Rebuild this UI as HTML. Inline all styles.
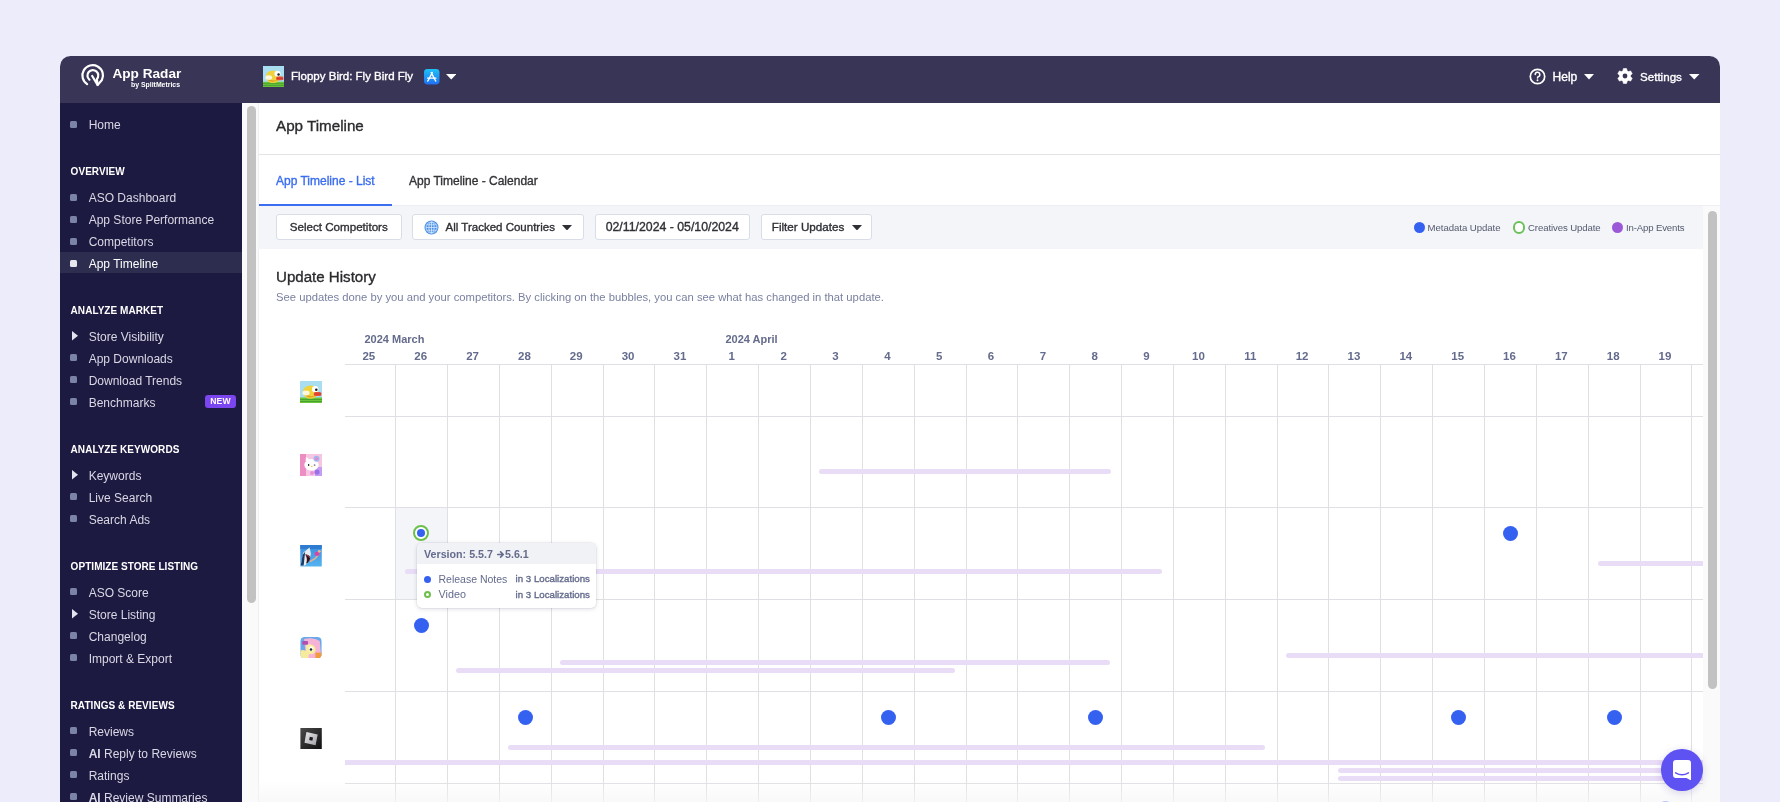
<!DOCTYPE html>
<html><head><meta charset="utf-8">
<style>
*{margin:0;padding:0;box-sizing:border-box;}
html,body{width:1780px;height:802px;overflow:hidden;background:#edecfa;font-family:"Liberation Sans",sans-serif;}
.a{position:absolute;white-space:nowrap;}
b{font-weight:700;}
</style></head>
<body><div style="position:absolute;left:0;top:0;width:1780px;height:802px;overflow:hidden;will-change:transform;">
<div class="a" style="left:60px;top:56px;width:1660px;height:760px;border-radius:10.5px 10.5px 0 0;overflow:hidden;background:#fff;"><div class="a" style="left:0;top:0;width:1660px;height:47px;background:#393556;"></div><div class="a" style="left:0;top:47px;width:182px;height:720px;background:#1d1a42;"></div></div>
<svg class="a" style="left:76px;top:60px" width="30" height="30" viewBox="0 0 30 30">
<g fill="none" stroke="#fff" stroke-width="2.2" stroke-linecap="round" stroke-linejoin="round">
<path d="M11.1 24.1 A10.3 10.3 0 1 1 25.9 20.1 L21.6 25"/>
<path d="M13.4 19.7 A5.4 5.4 0 1 1 20.9 19.1 L21.6 25 L16.2 16"/>
</g></svg>
<div class="a" style="left:112.50px;top:67.29px;font-size:13.6px;line-height:13.6px;color:#fff;font-weight:700;">App Radar</div>
<div class="a" style="left:131.00px;top:82.46px;font-size:6.9px;line-height:6.9px;color:#fff;font-weight:700;">by SplitMetrics</div>
<svg class="a" style="left:263.3px;top:66px" width="21" height="21" viewBox="0 0 22 22">
<rect width="22" height="22" fill="#a9def0"/><rect y="16.5" width="22" height="5.5" fill="#6cc43c"/><path d="M0 18.5H22M0 20.5H22" stroke="#3f9a2a" stroke-width="0.8"/>
<ellipse cx="10.5" cy="11.2" rx="7.6" ry="6.6" fill="#f0d23a"/><path d="M3.5 13 Q10 19.5 17 13.5 Q12 17 3.5 13Z" fill="#e0a020"/>
<ellipse cx="6" cy="12" rx="3.6" ry="2.4" fill="#fbf6e0"/>
<circle cx="15.2" cy="8.2" r="3.2" fill="#fff"/><circle cx="16.3" cy="8.8" r="1.3" fill="#202020"/>
<rect x="13.8" y="11" width="7.6" height="4" rx="1.5" fill="#e8503a"/><path d="M14.5 13H21" stroke="#c03020" stroke-width="0.6"/>
</svg>
<div class="a" style="left:291.00px;top:71.47px;font-size:11.5px;line-height:11.5px;color:#fff;-webkit-text-stroke:0.35px currentColor;">Floppy Bird: Fly Bird Fly</div>
<svg class="a" style="left:424px;top:69px" width="15.5" height="15.5" viewBox="0 0 16 16">
<defs><linearGradient id="asg" x1="0" y1="0" x2="0" y2="1"><stop offset="0" stop-color="#1ec1f8"/><stop offset="1" stop-color="#1f6ff2"/></linearGradient></defs>
<rect width="16" height="16" rx="3.6" fill="url(#asg)"/>
<g stroke="#fff" stroke-width="1.4" stroke-linecap="round" fill="none"><path d="M8.6 3.6 L4.6 11.2 L3.8 12.4"/><path d="M7.4 3.6 L11.4 11.2 L12.2 12.4"/><path d="M3.6 9.4 H12.4"/></g>
</svg>
<svg class="a" style="left:445.5px;top:74px" width="10.5" height="5.5" viewBox="0 0 10.5 5.5"><path d="M0 0H10.5L5.25 5.5Z" fill="#fff"/></svg>
<svg class="a" style="left:1529px;top:67.9px" width="17" height="17" viewBox="0 0 17 17">
<circle cx="8.5" cy="8.5" r="7.2" fill="none" stroke="#fff" stroke-width="1.7"/>
<path d="M6.2 6.6 A2.3 2.3 0 1 1 9.3 8.7 C8.7 9 8.5 9.3 8.5 10.1" fill="none" stroke="#fff" stroke-width="1.5" stroke-linecap="round"/>
<circle cx="8.5" cy="12.3" r="0.95" fill="#fff"/>
</svg>
<div class="a" style="left:1552.60px;top:71.14px;font-size:12px;line-height:12px;color:#fff;-webkit-text-stroke:0.35px currentColor;">Help</div>
<svg class="a" style="left:1584px;top:74px" width="10" height="5.5" viewBox="0 0 10 5.5"><path d="M0 0H10L5.0 5.5Z" fill="#fff"/></svg>
<svg class="a" style="left:1617.2px;top:67.9px" width="16" height="16" viewBox="0 0 16 16">
<path d="M5.92 2.80 L6.42 0.57 L9.58 0.57 L10.08 2.80 L11.47 3.60 L13.65 2.91 L15.23 5.66 L13.54 7.20 L13.54 8.80 L15.23 10.34 L13.65 13.09 L11.47 12.40 L10.08 13.20 L9.58 15.43 L6.42 15.43 L5.92 13.20 L4.53 12.40 L2.35 13.09 L0.77 10.34 L2.46 8.80 L2.46 7.20 L0.77 5.66 L2.35 2.91 L4.53 3.60Z" fill="#fff" stroke="#fff" stroke-width="0.6" stroke-linejoin="round"/><circle cx="8" cy="8" r="2.4" fill="#393556"/>
</svg>
<div class="a" style="left:1640.00px;top:71.48px;font-size:11.6px;line-height:11.6px;color:#fff;-webkit-text-stroke:0.35px currentColor;">Settings</div>
<svg class="a" style="left:1689px;top:74px" width="10.5" height="5.5" viewBox="0 0 10.5 5.5"><path d="M0 0H10.5L5.25 5.5Z" fill="#fff"/></svg>
<div class="a" style="left:60.00px;top:251.60px;width:182.00px;height:21.40px;background:#2d2e4f;"></div>
<div class="a" style="left:70.10px;top:120.70px;width:7.20px;height:7.20px;background:#7b83a6;border-radius:1.5px;"></div>
<div class="a" style="left:88.70px;top:119.44px;font-size:12px;line-height:12px;color:#d9d8e4;">Home</div>
<div class="a" style="left:70.60px;top:166.94px;font-size:10px;line-height:10px;color:#fff;font-weight:700;letter-spacing:0.05px;">OVERVIEW</div>
<div class="a" style="left:70.10px;top:193.60px;width:7.20px;height:7.20px;background:#7b83a6;border-radius:1.5px;"></div>
<div class="a" style="left:88.70px;top:192.34px;font-size:12px;line-height:12px;color:#d9d8e4;">ASO Dashboard</div>
<div class="a" style="left:70.10px;top:215.60px;width:7.20px;height:7.20px;background:#7b83a6;border-radius:1.5px;"></div>
<div class="a" style="left:88.70px;top:214.34px;font-size:12px;line-height:12px;color:#d9d8e4;">App Store Performance</div>
<div class="a" style="left:70.10px;top:237.60px;width:7.20px;height:7.20px;background:#7b83a6;border-radius:1.5px;"></div>
<div class="a" style="left:88.70px;top:236.34px;font-size:12px;line-height:12px;color:#d9d8e4;">Competitors</div>
<div class="a" style="left:70.10px;top:259.60px;width:7.20px;height:7.20px;background:#e6e6ee;border-radius:1.5px;"></div>
<div class="a" style="left:88.70px;top:258.34px;font-size:12px;line-height:12px;color:#ffffff;">App Timeline</div>
<div class="a" style="left:70.60px;top:305.74px;font-size:10px;line-height:10px;color:#fff;font-weight:700;letter-spacing:0.05px;">ANALYZE MARKET</div>
<svg class="a" style="left:72.3px;top:331.4px" width="6" height="9.4" viewBox="0 0 6 9.4"><path d="M0 0L6 4.7L0 9.4Z" fill="#e4e4ee"/></svg>
<div class="a" style="left:88.70px;top:330.94px;font-size:12px;line-height:12px;color:#d9d8e4;">Store Visibility</div>
<div class="a" style="left:70.10px;top:354.20px;width:7.20px;height:7.20px;background:#7b83a6;border-radius:1.5px;"></div>
<div class="a" style="left:88.70px;top:352.94px;font-size:12px;line-height:12px;color:#d9d8e4;">App Downloads</div>
<div class="a" style="left:70.10px;top:376.20px;width:7.20px;height:7.20px;background:#7b83a6;border-radius:1.5px;"></div>
<div class="a" style="left:88.70px;top:374.94px;font-size:12px;line-height:12px;color:#d9d8e4;">Download Trends</div>
<div class="a" style="left:70.10px;top:398.20px;width:7.20px;height:7.20px;background:#7b83a6;border-radius:1.5px;"></div>
<div class="a" style="left:88.70px;top:396.94px;font-size:12px;line-height:12px;color:#d9d8e4;">Benchmarks</div>
<div class="a" style="left:70.60px;top:444.94px;font-size:10px;line-height:10px;color:#fff;font-weight:700;letter-spacing:0.05px;">ANALYZE KEYWORDS</div>
<svg class="a" style="left:72.3px;top:470.4px" width="6" height="9.4" viewBox="0 0 6 9.4"><path d="M0 0L6 4.7L0 9.4Z" fill="#e4e4ee"/></svg>
<div class="a" style="left:88.70px;top:469.94px;font-size:12px;line-height:12px;color:#d9d8e4;">Keywords</div>
<div class="a" style="left:70.10px;top:493.20px;width:7.20px;height:7.20px;background:#7b83a6;border-radius:1.5px;"></div>
<div class="a" style="left:88.70px;top:491.94px;font-size:12px;line-height:12px;color:#d9d8e4;">Live Search</div>
<div class="a" style="left:70.10px;top:515.20px;width:7.20px;height:7.20px;background:#7b83a6;border-radius:1.5px;"></div>
<div class="a" style="left:88.70px;top:513.94px;font-size:12px;line-height:12px;color:#d9d8e4;">Search Ads</div>
<div class="a" style="left:70.60px;top:561.74px;font-size:10px;line-height:10px;color:#fff;font-weight:700;letter-spacing:0.05px;">OPTIMIZE STORE LISTING</div>
<div class="a" style="left:70.10px;top:588.20px;width:7.20px;height:7.20px;background:#7b83a6;border-radius:1.5px;"></div>
<div class="a" style="left:88.70px;top:586.94px;font-size:12px;line-height:12px;color:#d9d8e4;">ASO Score</div>
<svg class="a" style="left:72.3px;top:609.4px" width="6" height="9.4" viewBox="0 0 6 9.4"><path d="M0 0L6 4.7L0 9.4Z" fill="#e4e4ee"/></svg>
<div class="a" style="left:88.70px;top:608.94px;font-size:12px;line-height:12px;color:#d9d8e4;">Store Listing</div>
<div class="a" style="left:70.10px;top:632.20px;width:7.20px;height:7.20px;background:#7b83a6;border-radius:1.5px;"></div>
<div class="a" style="left:88.70px;top:630.94px;font-size:12px;line-height:12px;color:#d9d8e4;">Changelog</div>
<div class="a" style="left:70.10px;top:654.20px;width:7.20px;height:7.20px;background:#7b83a6;border-radius:1.5px;"></div>
<div class="a" style="left:88.70px;top:652.94px;font-size:12px;line-height:12px;color:#d9d8e4;">Import &amp; Export</div>
<div class="a" style="left:70.60px;top:700.74px;font-size:10px;line-height:10px;color:#fff;font-weight:700;letter-spacing:0.05px;">RATINGS &amp; REVIEWS</div>
<div class="a" style="left:70.10px;top:727.20px;width:7.20px;height:7.20px;background:#7b83a6;border-radius:1.5px;"></div>
<div class="a" style="left:88.70px;top:725.94px;font-size:12px;line-height:12px;color:#d9d8e4;">Reviews</div>
<div class="a" style="left:70.10px;top:749.20px;width:7.20px;height:7.20px;background:#7b83a6;border-radius:1.5px;"></div>
<div class="a" style="left:88.70px;top:747.94px;font-size:12px;line-height:12px;color:#d9d8e4;"><b>AI</b> Reply to Reviews</div>
<div class="a" style="left:70.10px;top:771.20px;width:7.20px;height:7.20px;background:#7b83a6;border-radius:1.5px;"></div>
<div class="a" style="left:88.70px;top:769.94px;font-size:12px;line-height:12px;color:#d9d8e4;">Ratings</div>
<div class="a" style="left:70.10px;top:793.20px;width:7.20px;height:7.20px;background:#7b83a6;border-radius:1.5px;"></div>
<div class="a" style="left:88.70px;top:791.94px;font-size:12px;line-height:12px;color:#d9d8e4;"><b>AI</b> Review Summaries</div>
<div class="a" style="left:205px;top:395.4px;width:31px;height:12.6px;border-radius:3px;background:#7b45ef;color:#fff;font-size:8.6px;font-weight:700;line-height:12.6px;text-align:center;letter-spacing:0.2px;">NEW</div>
<div class="a" style="left:242.00px;top:103.00px;width:16.50px;height:700.00px;background:#fafafa;"></div>
<div class="a" style="left:258.00px;top:103.00px;width:1.00px;height:700.00px;background:#efefef;"></div>
<div class="a" style="left:247.00px;top:106.20px;width:9.00px;height:497.00px;background:#c2c2c2;border-radius:4.5px;"></div>
<div class="a" style="left:276.00px;top:118.43px;font-size:15.2px;line-height:15.2px;color:#2b2b2f;-webkit-text-stroke:0.35px currentColor;">App Timeline</div>
<div class="a" style="left:259.00px;top:153.50px;width:1461.00px;height:1.00px;background:#e3e3e6;"></div>
<div class="a" style="left:276.00px;top:175.14px;font-size:12px;line-height:12px;color:#3a6df0;-webkit-text-stroke:0.35px currentColor;">App Timeline - List</div>
<div class="a" style="left:409.00px;top:175.14px;font-size:12px;line-height:12px;color:#333338;-webkit-text-stroke:0.35px currentColor;">App Timeline - Calendar</div>
<div class="a" style="left:259.00px;top:205.00px;width:1461.00px;height:1.20px;background:#eceef3;"></div>
<div class="a" style="left:259.00px;top:204.00px;width:133.00px;height:2.00px;background:#3a6df0;"></div>
<div class="a" style="left:258.00px;top:206.00px;width:1445.00px;height:42.60px;background:#f3f5f9;"></div>
<div class="a" style="left:276.00px;top:214.00px;width:125.50px;height:26.00px;background:#fff;border:1px solid #d9ddea;border-radius:3px;background:#fff;"></div>
<div class="a" style="left:289.80px;top:221.48px;font-size:11.6px;line-height:11.6px;color:#2f3036;-webkit-text-stroke:0.35px currentColor;">Select Competitors</div>
<div class="a" style="left:412.00px;top:214.00px;width:171.50px;height:26.00px;background:#fff;border:1px solid #d9ddea;border-radius:3px;background:#fff;"></div>
<svg class="a" style="left:423.5px;top:219.5px" width="15" height="15" viewBox="0 0 15 15">
<circle cx="7.5" cy="7.5" r="7" fill="#4a90e8"/>
<g fill="none" stroke="#d8e8fb" stroke-width="0.8"><ellipse cx="7.5" cy="7.5" rx="5.5" ry="5.5"/><ellipse cx="7.5" cy="7.5" rx="2.6" ry="5.5"/><path d="M2 7.5H13M2.8 4.8H12.2M2.8 10.2H12.2M7.5 2V13"/></g>
</svg>
<div class="a" style="left:445.60px;top:221.57px;font-size:11.5px;line-height:11.5px;color:#2f3036;-webkit-text-stroke:0.35px currentColor;">All Tracked Countries</div>
<svg class="a" style="left:562.4px;top:224.5px" width="10" height="5.5" viewBox="0 0 10 5.5"><path d="M0 0H10L5.0 5.5Z" fill="#2f3036"/></svg>
<div class="a" style="left:594.50px;top:214.00px;width:155.00px;height:26.00px;background:#fff;border:1px solid #d9ddea;border-radius:3px;background:#fff;"></div>
<div class="a" style="left:605.70px;top:220.89px;font-size:12.3px;line-height:12.3px;color:#2f3036;-webkit-text-stroke:0.35px currentColor;">02/11/2024 - 05/10/2024</div>
<div class="a" style="left:760.70px;top:214.00px;width:111.50px;height:26.00px;background:#fff;border:1px solid #d9ddea;border-radius:3px;background:#fff;"></div>
<div class="a" style="left:771.80px;top:221.44px;font-size:11.65px;line-height:11.65px;color:#2f3036;-webkit-text-stroke:0.35px currentColor;">Filter Updates</div>
<svg class="a" style="left:851.5px;top:224.5px" width="10" height="5.5" viewBox="0 0 10 5.5"><path d="M0 0H10L5.0 5.5Z" fill="#2f3036"/></svg>
<div class="a" style="left:1414px;top:221.5px;width:11px;height:11px;border-radius:50%;background:#3461f0;"></div>
<div class="a" style="left:1427.60px;top:222.67px;font-size:9.6px;line-height:9.6px;color:#555a6e;letter-spacing:-0.05px;">Metadata Update</div>
<div class="a" style="left:1512.5px;top:221px;width:12.5px;height:12.5px;border-radius:50%;border:2px solid #6cc05a;background:#fff;"></div>
<div class="a" style="left:1528.00px;top:222.67px;font-size:9.6px;line-height:9.6px;color:#555a6e;letter-spacing:-0.1px;">Creatives Update</div>
<div class="a" style="left:1612px;top:221.5px;width:11px;height:11px;border-radius:50%;background:#9b59d8;"></div>
<div class="a" style="left:1626.00px;top:222.67px;font-size:9.6px;line-height:9.6px;color:#555a6e;letter-spacing:-0.15px;">In-App Events</div>
<div class="a" style="left:276.00px;top:269.12px;font-size:15.1px;line-height:15.1px;color:#2b2b2f;-webkit-text-stroke:0.35px currentColor;">Update History</div>
<div class="a" style="left:276.00px;top:292.08px;font-size:11.25px;line-height:11.25px;color:#7a80a0;">See updates done by you and your competitors. By clicking on the bubbles, you can see what has changed in that update.</div>
<div class="a" style="left:0;top:0;width:1703px;height:802px;overflow:hidden;clip-path:inset(0px 0px 0px 345px);">
<div class="a" style="left:395.70px;top:507.50px;width:51.85px;height:91.70px;background:#f4f5f9;"></div>
<div class="a" style="left:395.00px;top:364.00px;width:1.00px;height:450.00px;background:#e0e0e4;"></div>
<div class="a" style="left:447.00px;top:364.00px;width:1.00px;height:450.00px;background:#e0e0e4;"></div>
<div class="a" style="left:499.00px;top:364.00px;width:1.00px;height:450.00px;background:#e0e0e4;"></div>
<div class="a" style="left:551.00px;top:364.00px;width:1.00px;height:450.00px;background:#e0e0e4;"></div>
<div class="a" style="left:603.00px;top:364.00px;width:1.00px;height:450.00px;background:#e0e0e4;"></div>
<div class="a" style="left:654.00px;top:364.00px;width:1.00px;height:450.00px;background:#e0e0e4;"></div>
<div class="a" style="left:706.00px;top:364.00px;width:1.00px;height:450.00px;background:#e0e0e4;"></div>
<div class="a" style="left:758.00px;top:364.00px;width:1.00px;height:450.00px;background:#e0e0e4;"></div>
<div class="a" style="left:810.00px;top:364.00px;width:1.00px;height:450.00px;background:#e0e0e4;"></div>
<div class="a" style="left:862.00px;top:364.00px;width:1.00px;height:450.00px;background:#e0e0e4;"></div>
<div class="a" style="left:914.00px;top:364.00px;width:1.00px;height:450.00px;background:#e0e0e4;"></div>
<div class="a" style="left:966.00px;top:364.00px;width:1.00px;height:450.00px;background:#e0e0e4;"></div>
<div class="a" style="left:1017.00px;top:364.00px;width:1.00px;height:450.00px;background:#e0e0e4;"></div>
<div class="a" style="left:1069.00px;top:364.00px;width:1.00px;height:450.00px;background:#e0e0e4;"></div>
<div class="a" style="left:1121.00px;top:364.00px;width:1.00px;height:450.00px;background:#e0e0e4;"></div>
<div class="a" style="left:1173.00px;top:364.00px;width:1.00px;height:450.00px;background:#e0e0e4;"></div>
<div class="a" style="left:1225.00px;top:364.00px;width:1.00px;height:450.00px;background:#e0e0e4;"></div>
<div class="a" style="left:1277.00px;top:364.00px;width:1.00px;height:450.00px;background:#e0e0e4;"></div>
<div class="a" style="left:1328.00px;top:364.00px;width:1.00px;height:450.00px;background:#e0e0e4;"></div>
<div class="a" style="left:1380.00px;top:364.00px;width:1.00px;height:450.00px;background:#e0e0e4;"></div>
<div class="a" style="left:1432.00px;top:364.00px;width:1.00px;height:450.00px;background:#e0e0e4;"></div>
<div class="a" style="left:1484.00px;top:364.00px;width:1.00px;height:450.00px;background:#e0e0e4;"></div>
<div class="a" style="left:1536.00px;top:364.00px;width:1.00px;height:450.00px;background:#e0e0e4;"></div>
<div class="a" style="left:1588.00px;top:364.00px;width:1.00px;height:450.00px;background:#e0e0e4;"></div>
<div class="a" style="left:1640.00px;top:364.00px;width:1.00px;height:450.00px;background:#e0e0e4;"></div>
<div class="a" style="left:1691.00px;top:364.00px;width:1.00px;height:450.00px;background:#e0e0e4;"></div>
<div class="a" style="left:345.00px;top:364.00px;width:1358.00px;height:1.00px;background:#e0e0e4;"></div>
<div class="a" style="left:345.00px;top:416.00px;width:1358.00px;height:1.00px;background:#e0e0e4;"></div>
<div class="a" style="left:345.00px;top:507.00px;width:1358.00px;height:1.00px;background:#e0e0e4;"></div>
<div class="a" style="left:345.00px;top:599.00px;width:1358.00px;height:1.00px;background:#e0e0e4;"></div>
<div class="a" style="left:345.00px;top:691.00px;width:1358.00px;height:1.00px;background:#e0e0e4;"></div>
<div class="a" style="left:345.00px;top:783.00px;width:1358.00px;height:1.00px;background:#e0e0e4;"></div>
<div class="a" style="left:349.77px;top:351.02px;width:40px;margin-left:-0.9px;text-align:center;font-size:11.5px;line-height:11.5px;font-weight:700;color:#646b8c;">25</div>
<div class="a" style="left:401.62px;top:351.02px;width:40px;margin-left:-0.9px;text-align:center;font-size:11.5px;line-height:11.5px;font-weight:700;color:#646b8c;">26</div>
<div class="a" style="left:453.47px;top:351.02px;width:40px;margin-left:-0.9px;text-align:center;font-size:11.5px;line-height:11.5px;font-weight:700;color:#646b8c;">27</div>
<div class="a" style="left:505.31px;top:351.02px;width:40px;margin-left:-0.9px;text-align:center;font-size:11.5px;line-height:11.5px;font-weight:700;color:#646b8c;">28</div>
<div class="a" style="left:557.16px;top:351.02px;width:40px;margin-left:-0.9px;text-align:center;font-size:11.5px;line-height:11.5px;font-weight:700;color:#646b8c;">29</div>
<div class="a" style="left:609.00px;top:351.02px;width:40px;margin-left:-0.9px;text-align:center;font-size:11.5px;line-height:11.5px;font-weight:700;color:#646b8c;">30</div>
<div class="a" style="left:660.85px;top:351.02px;width:40px;margin-left:-0.9px;text-align:center;font-size:11.5px;line-height:11.5px;font-weight:700;color:#646b8c;">31</div>
<div class="a" style="left:712.69px;top:351.02px;width:40px;margin-left:-0.9px;text-align:center;font-size:11.5px;line-height:11.5px;font-weight:700;color:#646b8c;">1</div>
<div class="a" style="left:764.54px;top:351.02px;width:40px;margin-left:-0.9px;text-align:center;font-size:11.5px;line-height:11.5px;font-weight:700;color:#646b8c;">2</div>
<div class="a" style="left:816.39px;top:351.02px;width:40px;margin-left:-0.9px;text-align:center;font-size:11.5px;line-height:11.5px;font-weight:700;color:#646b8c;">3</div>
<div class="a" style="left:868.23px;top:351.02px;width:40px;margin-left:-0.9px;text-align:center;font-size:11.5px;line-height:11.5px;font-weight:700;color:#646b8c;">4</div>
<div class="a" style="left:920.08px;top:351.02px;width:40px;margin-left:-0.9px;text-align:center;font-size:11.5px;line-height:11.5px;font-weight:700;color:#646b8c;">5</div>
<div class="a" style="left:971.92px;top:351.02px;width:40px;margin-left:-0.9px;text-align:center;font-size:11.5px;line-height:11.5px;font-weight:700;color:#646b8c;">6</div>
<div class="a" style="left:1023.77px;top:351.02px;width:40px;margin-left:-0.9px;text-align:center;font-size:11.5px;line-height:11.5px;font-weight:700;color:#646b8c;">7</div>
<div class="a" style="left:1075.62px;top:351.02px;width:40px;margin-left:-0.9px;text-align:center;font-size:11.5px;line-height:11.5px;font-weight:700;color:#646b8c;">8</div>
<div class="a" style="left:1127.46px;top:351.02px;width:40px;margin-left:-0.9px;text-align:center;font-size:11.5px;line-height:11.5px;font-weight:700;color:#646b8c;">9</div>
<div class="a" style="left:1179.31px;top:351.02px;width:40px;margin-left:-0.9px;text-align:center;font-size:11.5px;line-height:11.5px;font-weight:700;color:#646b8c;">10</div>
<div class="a" style="left:1231.15px;top:351.02px;width:40px;margin-left:-0.9px;text-align:center;font-size:11.5px;line-height:11.5px;font-weight:700;color:#646b8c;">11</div>
<div class="a" style="left:1283.00px;top:351.02px;width:40px;margin-left:-0.9px;text-align:center;font-size:11.5px;line-height:11.5px;font-weight:700;color:#646b8c;">12</div>
<div class="a" style="left:1334.85px;top:351.02px;width:40px;margin-left:-0.9px;text-align:center;font-size:11.5px;line-height:11.5px;font-weight:700;color:#646b8c;">13</div>
<div class="a" style="left:1386.69px;top:351.02px;width:40px;margin-left:-0.9px;text-align:center;font-size:11.5px;line-height:11.5px;font-weight:700;color:#646b8c;">14</div>
<div class="a" style="left:1438.54px;top:351.02px;width:40px;margin-left:-0.9px;text-align:center;font-size:11.5px;line-height:11.5px;font-weight:700;color:#646b8c;">15</div>
<div class="a" style="left:1490.38px;top:351.02px;width:40px;margin-left:-0.9px;text-align:center;font-size:11.5px;line-height:11.5px;font-weight:700;color:#646b8c;">16</div>
<div class="a" style="left:1542.23px;top:351.02px;width:40px;margin-left:-0.9px;text-align:center;font-size:11.5px;line-height:11.5px;font-weight:700;color:#646b8c;">17</div>
<div class="a" style="left:1594.08px;top:351.02px;width:40px;margin-left:-0.9px;text-align:center;font-size:11.5px;line-height:11.5px;font-weight:700;color:#646b8c;">18</div>
<div class="a" style="left:1645.92px;top:351.02px;width:40px;margin-left:-0.9px;text-align:center;font-size:11.5px;line-height:11.5px;font-weight:700;color:#646b8c;">19</div>
<div class="a" style="left:1697.77px;top:351.02px;width:40px;margin-left:-0.9px;text-align:center;font-size:11.5px;line-height:11.5px;font-weight:700;color:#646b8c;">20</div>
<div class="a" style="left:364.50px;top:333.69px;font-size:11px;line-height:11px;color:#646b8c;font-weight:700;">2024 March</div>
<div class="a" style="left:725.40px;top:333.69px;font-size:11px;line-height:11px;color:#646b8c;font-weight:700;">2024 April</div>
<div class="a" style="left:819.00px;top:469.00px;width:291.50px;height:5.00px;background:#e9dcf6;border-radius:2.5px;"></div>
<div class="a" style="left:404.50px;top:568.50px;width:757.50px;height:5.00px;background:#e9dcf6;border-radius:2.5px;"></div>
<div class="a" style="left:1597.70px;top:560.50px;width:142.30px;height:5.00px;background:#e9dcf6;border-radius:2.5px;"></div>
<div class="a" style="left:560.00px;top:660.20px;width:550.00px;height:5.00px;background:#e9dcf6;border-radius:2.5px;"></div>
<div class="a" style="left:456.00px;top:668.30px;width:499.00px;height:5.00px;background:#e9dcf6;border-radius:2.5px;"></div>
<div class="a" style="left:1286.40px;top:652.50px;width:453.60px;height:5.00px;background:#e9dcf6;border-radius:2.5px;"></div>
<div class="a" style="left:508.00px;top:744.50px;width:757.00px;height:5.00px;background:#e9dcf6;border-radius:2.5px;"></div>
<div class="a" style="left:330.00px;top:760.00px;width:1410.00px;height:5.00px;background:#e9dcf6;border-radius:2.5px;"></div>
<div class="a" style="left:1338.00px;top:767.80px;width:402.00px;height:5.00px;background:#e9dcf6;border-radius:2.5px;"></div>
<div class="a" style="left:1338.00px;top:775.50px;width:402.00px;height:5.00px;background:#e9dcf6;border-radius:2.5px;"></div>
<div class="a" style="left:1502.88px;top:525.50px;width:15px;height:15px;border-radius:50%;background:#3461f0;"></div>
<div class="a" style="left:414.12px;top:618.00px;width:15px;height:15px;border-radius:50%;background:#3461f0;"></div>
<div class="a" style="left:517.81px;top:709.50px;width:15px;height:15px;border-radius:50%;background:#3461f0;"></div>
<div class="a" style="left:880.73px;top:709.50px;width:15px;height:15px;border-radius:50%;background:#3461f0;"></div>
<div class="a" style="left:1088.12px;top:709.50px;width:15px;height:15px;border-radius:50%;background:#3461f0;"></div>
<div class="a" style="left:1451.04px;top:709.50px;width:15px;height:15px;border-radius:50%;background:#3461f0;"></div>
<div class="a" style="left:1606.58px;top:709.50px;width:15px;height:15px;border-radius:50%;background:#3461f0;"></div>
<div class="a" style="left:1658.42px;top:800.50px;width:15px;height:15px;border-radius:50%;background:#3461f0;"></div>
<div class="a" style="left:413px;top:525px;width:16px;height:16px;border-radius:50%;border:2px solid #6cc04a;background:#fff;"></div>
<div class="a" style="left:416.70px;top:528.70px;width:8.6px;height:8.6px;border-radius:50%;background:#3461f0;"></div>
</div>
<div class="a" style="left:1703.00px;top:206.20px;width:17.00px;height:600.00px;background:#fafafa;"></div>
<div class="a" style="left:1708.00px;top:211.00px;width:9.00px;height:478.00px;background:#c2c2c2;border-radius:4.5px;"></div>
<svg class="a" style="left:300px;top:381px" width="22" height="22" viewBox="0 0 22 22">
<rect width="22" height="22" fill="#a9def0"/><rect y="16.5" width="22" height="5.5" fill="#6cc43c"/><path d="M0 18.5H22M0 20.5H22" stroke="#3f9a2a" stroke-width="0.8"/>
<ellipse cx="10.5" cy="11.2" rx="7.6" ry="6.6" fill="#f0d23a"/><path d="M3.5 13 Q10 19.5 17 13.5 Q12 17 3.5 13Z" fill="#e0a020"/>
<ellipse cx="6" cy="12" rx="3.6" ry="2.4" fill="#fbf6e0"/>
<circle cx="15.2" cy="8.2" r="3.2" fill="#fff"/><circle cx="16.3" cy="8.8" r="1.3" fill="#202020"/>
<rect x="13.8" y="11" width="7.6" height="4" rx="1.5" fill="#e8503a"/><path d="M14.5 13H21" stroke="#c03020" stroke-width="0.6"/>
</svg>
<svg class="a" style="left:300px;top:453.5px" width="22" height="22" viewBox="0 0 22 22">
<rect width="22" height="22" fill="#f6c6e2"/><rect width="6" height="22" fill="#ee8cc4"/><rect x="15" y="13" width="7" height="9" fill="#c49ef0"/><circle cx="17" cy="18" r="2.6" fill="#9a70e8"/><circle cx="12" cy="19" r="2" fill="#e890d8"/>
<ellipse cx="11.5" cy="10.8" rx="7.2" ry="5.8" fill="#ffffff"/><path d="M5.5 7 L6 2.8 L9.5 5.5Z" fill="#fff"/><path d="M14 5 L17.5 3 L17.8 7Z" fill="#fff"/>
<circle cx="16.5" cy="4.8" r="3" fill="#9fb8f0"/><circle cx="16.5" cy="4.8" r="1.4" fill="#f080c8"/>
<ellipse cx="8.6" cy="11" rx="0.75" ry="1" fill="#222"/><ellipse cx="14.6" cy="11" rx="0.9" ry="0.6" fill="#222"/><ellipse cx="11.8" cy="12.3" rx="0.9" ry="0.6" fill="#f0c020"/>
</svg>
<svg class="a" style="left:300px;top:545px" width="22" height="21.5" viewBox="0 0 22 22">
<defs><linearGradient id="shk" x1="0" y1="0" x2="0" y2="1"><stop offset="0" stop-color="#3b8ee0"/><stop offset="1" stop-color="#56b4f0"/></linearGradient></defs>
<rect width="22" height="22" fill="url(#shk)"/><rect y="0" width="22" height="4" fill="#2f7bd0"/>
<path d="M0.5 21 L3 8 L9.5 2.5 L11 9 L9 16 L5 21Z" fill="#e6eef2"/><path d="M0.5 21 L2.5 10 L5 7 L3.5 21Z" fill="#1c3a68"/>
<path d="M5 9.5 Q10.5 10 10.2 13.5 Q9 18 6 19 Q8 14.5 5 9.5Z" fill="#3a1018"/><path d="M6 10 Q9.5 11 9.6 13" fill="none" stroke="#d06070" stroke-width="0.8"/>
<path d="M10 17 L15 14 L19 9.5" stroke="#e8b090" stroke-width="1.6" fill="none"/><rect x="15" y="7" width="4.5" height="4" rx="1.2" fill="#e040a0"/><circle cx="19.5" cy="6.5" r="1.5" fill="#f0b890"/>
</svg>
<svg class="a" style="left:300px;top:636.5px" width="22" height="21.5" viewBox="0 0 22 22">
<defs><clipPath id="pny"><rect width="22" height="22" rx="4.5"/></clipPath></defs>
<g clip-path="url(#pny)"><rect width="22" height="22" fill="#6aa8ec"/><path d="M4 2 Q14 0 20 4 L21 16 Q18 21 14 22 L6 22 Z" fill="#f5b4d6"/>
<path d="M6 8 Q12 6 15 10 Q17 14 14 17 Q9 19 6 15Z" fill="#f8eda0"/><path d="M0 14 Q5 12 9 17 L8 22 L0 22Z" fill="#f6eb9c"/>
<ellipse cx="11.2" cy="12" rx="2" ry="2.5" fill="#fff"/><circle cx="11" cy="12.8" r="1.3" fill="#18283a"/>
<rect x="2" y="4" width="6" height="4" rx="1" fill="#b050b0"/><rect x="15.5" y="16" width="6.5" height="6" fill="#f39a3c"/></g>
</svg>
<svg class="a" style="left:299.6px;top:728px" width="22.2" height="21.4" viewBox="0 0 22 22">
<defs><linearGradient id="rbx" x1="0" y1="0" x2="1" y2="1"><stop offset="0" stop-color="#4a4a4a"/><stop offset="1" stop-color="#0e0e0e"/></linearGradient>
<linearGradient id="rbs" x1="0" y1="0" x2="1" y2="1"><stop offset="0" stop-color="#e8e8ea"/><stop offset="1" stop-color="#a0a0a8"/></linearGradient></defs>
<rect width="22" height="22" fill="url(#rbx)"/><path d="M6.2 4.2 L17.8 6.8 L15.6 17.8 L4.2 15.2 Z" fill="url(#rbs)"/><rect x="9.3" y="9.3" width="3.4" height="3.4" fill="#1a1a1a" transform="rotate(12 11 11)"/>
</svg>
<div class="a" style="left:417.3px;top:542.7px;width:179.2px;height:65.3px;background:#fff;border-radius:5px;box-shadow:0 1px 4px rgba(40,40,80,0.16),0 0 0 0.5px rgba(40,40,80,0.08);overflow:hidden;"><div class="a" style="left:0;top:0;width:180px;height:21.5px;background:#f1f2f6;"></div></div>
<div class="a" style="left:424.00px;top:548.54px;font-size:10.7px;line-height:10.7px;color:#646b8c;font-weight:700;">Version: 5.5.7</div>
<svg class="a" style="left:497px;top:550.5px" width="7.5" height="7" viewBox="0 0 7.5 7"><path d="M0.6 3.5H6.2M3.6 0.9L6.3 3.5L3.6 6.1" fill="none" stroke="#646b8c" stroke-width="1.6" stroke-linecap="round" stroke-linejoin="round"/></svg>
<div class="a" style="left:505.00px;top:548.54px;font-size:10.7px;line-height:10.7px;color:#646b8c;font-weight:700;">5.6.1</div>
<div class="a" style="left:424.30px;top:575.50px;width:7px;height:7px;border-radius:50%;background:#3461f0;"></div>
<div class="a" style="left:438.50px;top:574.11px;font-size:10.5px;line-height:10.5px;color:#646b8c;">Release Notes</div>
<div class="a" style="left:515.60px;top:574.39px;font-size:9.7px;line-height:9.7px;color:#646b8c;-webkit-text-stroke:0.35px currentColor;">in 3 Localizations</div>
<div class="a" style="left:424.3px;top:590.6px;width:7px;height:7px;border-radius:50%;border:2px solid #6cc04a;background:#fff;"></div>
<div class="a" style="left:438.50px;top:588.86px;font-size:10.8px;line-height:10.8px;color:#646b8c;">Video</div>
<div class="a" style="left:515.60px;top:589.59px;font-size:9.7px;line-height:9.7px;color:#646b8c;-webkit-text-stroke:0.35px currentColor;">in 3 Localizations</div>
<div class="a" style="left:258px;top:780px;width:1445px;height:22px;background:linear-gradient(rgba(246,246,248,0),rgba(246,246,248,0.7));"></div>
<div class="a" style="left:1661.4px;top:749.3px;width:41.4px;height:41.4px;border-radius:50%;background:#5f52f2;box-shadow:0 2px 8px rgba(40,30,120,0.18);"></div>
<svg class="a" style="left:1673px;top:759.8px" width="18" height="20.5" viewBox="0 0 18 20.5">
<path d="M3 0 H15 A3 3 0 0 1 18 3 V20.5 L13.5 18 H3 A3 3 0 0 1 0 15 V3 A3 3 0 0 1 3 0Z" fill="#fff"/>
<path d="M2.6 12.8 Q9 16.8 15.4 12.8" fill="none" stroke="#5f52f2" stroke-width="1.5" stroke-linecap="round"/>
</svg>

</div></body></html>
